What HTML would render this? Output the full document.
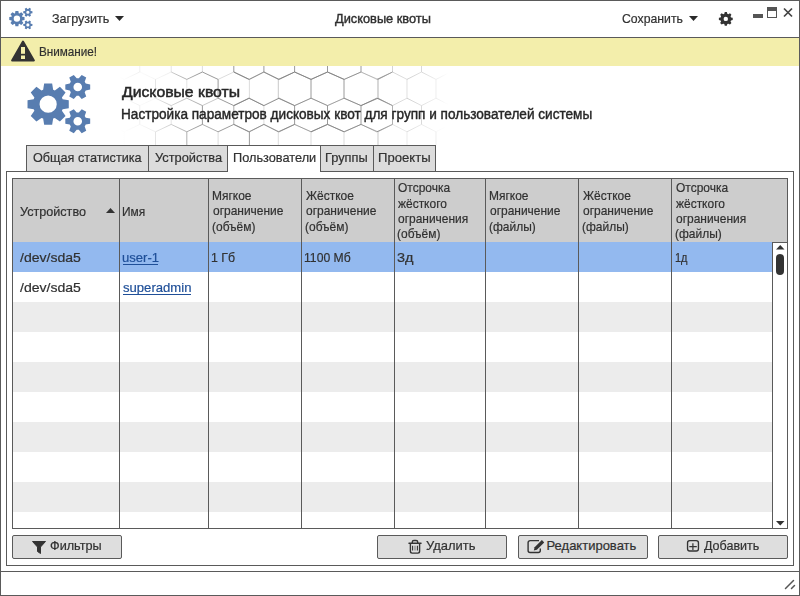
<!DOCTYPE html>
<html><head><meta charset="utf-8">
<style>
*{box-sizing:border-box;margin:0;padding:0}
html,body{width:800px;height:596px;overflow:hidden;background:#fff}
body{position:relative;font-family:"Liberation Sans",sans-serif;color:#333;font-size:13px}
.a{position:absolute}
.t{position:absolute;white-space:nowrap;line-height:1;transform-origin:0 0}
</style></head><body>
<div class="a" style="left:0;top:0;width:800px;height:596px;border:1px solid #5a5a5a"></div>
<svg class="a" style="left:0;top:0" width="40" height="37"><path fill="#587db0" fill-rule="evenodd" d="M18.75 13.25 L18.38 10.97 L15.42 10.97 L15.05 13.25 L14.42 13.51 L12.55 12.16 L10.46 14.25 L11.81 16.12 L11.55 16.75 L9.27 17.12 L9.27 20.08 L11.55 20.45 L11.81 21.08 L10.46 22.95 L12.55 25.04 L14.42 23.69 L15.05 23.95 L15.42 26.23 L18.38 26.23 L18.75 23.95 L19.38 23.69 L21.25 25.04 L23.34 22.95 L21.99 21.08 L22.25 20.45 L24.53 20.08 L24.53 17.12 L22.25 16.75 L21.99 16.12 L23.34 14.25 L21.25 12.16 L19.38 13.51ZM20.08 18.60A3.18 3.18 0 1 0 13.72 18.60A3.18 3.18 0 1 0 20.08 18.60ZM30.82 13.51 L32.45 13.22 L32.45 11.29 L30.82 11.00 L30.42 10.32 L30.98 8.75 L29.32 7.79 L28.24 9.06 L27.46 9.06 L26.39 7.79 L24.72 8.75 L25.28 10.32 L24.89 11.00 L23.25 11.29 L23.25 13.22 L24.89 13.51 L25.28 14.19 L24.72 15.76 L26.39 16.72 L27.46 15.45 L28.24 15.45 L29.32 16.72 L30.98 15.76 L30.42 14.19ZM29.44 12.25A1.59 1.59 0 1 0 26.26 12.25A1.59 1.59 0 1 0 29.44 12.25ZM30.82 26.17 L32.45 25.87 L32.45 23.95 L30.82 23.65 L30.42 22.97 L30.98 21.41 L29.32 20.44 L28.24 21.71 L27.46 21.71 L26.39 20.44 L24.72 21.41 L25.28 22.97 L24.89 23.65 L23.25 23.95 L23.25 25.87 L24.89 26.17 L25.28 26.85 L24.72 28.41 L26.39 29.37 L27.46 28.10 L28.24 28.10 L29.32 29.37 L30.98 28.41 L30.42 26.85ZM29.44 24.91A1.59 1.59 0 1 0 26.26 24.91A1.59 1.59 0 1 0 29.44 24.91Z"/></svg>
<div class="t" style="left:51.50px;top:12.00px;font-size:13px;-webkit-text-stroke:0.2px #2a2a2a;transform:scaleX(0.9661);">Загрузить</div>
<svg class="a" style="left:115px;top:16px" width="9" height="5"><path d="M0 0H9L4.5 5Z" fill="#2a2a2a"/></svg>
<div class="t" style="left:334.70px;top:11.70px;font-size:13px;-webkit-text-stroke:0.4px #2a2a2a;transform:scaleX(0.9845);">Дисковые квоты</div>
<div class="t" style="left:621.90px;top:12.00px;font-size:13px;-webkit-text-stroke:0.2px #2a2a2a;transform:scaleX(0.9430);">Сохранить</div>
<svg class="a" style="left:689px;top:16px" width="9" height="5"><path d="M0 0H9L4.5 5Z" fill="#2a2a2a"/></svg>
<svg class="a" style="left:700px;top:0" width="40" height="37"><path fill="#333" fill-rule="evenodd" d="M27.30 13.71 L26.85 11.98 L24.75 11.98 L24.30 13.71 L23.19 14.17 L21.65 13.26 L20.16 14.75 L21.07 16.29 L20.61 17.40 L18.88 17.85 L18.88 19.95 L20.61 20.40 L21.07 21.51 L20.16 23.05 L21.65 24.54 L23.19 23.63 L24.30 24.09 L24.75 25.82 L26.85 25.82 L27.30 24.09 L28.41 23.63 L29.95 24.54 L31.44 23.05 L30.53 21.51 L30.99 20.40 L32.72 19.95 L32.72 17.85 L30.99 17.40 L30.53 16.29 L31.44 14.75 L29.95 13.26 L28.41 14.17ZM28.00 18.90A2.20 2.20 0 1 0 23.60 18.90A2.20 2.20 0 1 0 28.00 18.90Z"/></svg>
<div class="a" style="left:753px;top:14px;width:10px;height:4px;background:#555"></div>
<div class="a" style="left:767px;top:7px;width:10px;height:11px;border:1px solid #555;border-top:4px solid #555"></div>
<svg class="a" style="left:783px;top:7px" width="10" height="11"><path d="M1 1.5L9 9.5M9 1.5L1 9.5" stroke="#444" stroke-width="1.7"/></svg>
<div class="a" style="left:0;top:37px;width:800px;height:1px;background:#5a5a5a"></div>
<div class="a" style="left:1px;top:38px;width:798px;height:28px;background:#f3eeab"></div>
<svg class="a" style="left:11px;top:40px" width="25" height="23" viewBox="0 0 25 23"><path d="M12 1.6 L22.9 20.4 H1.1 Z" fill="#333" stroke="#333" stroke-width="2" stroke-linejoin="round"/><rect x="10" y="7" width="4" height="6.8" fill="#f3eeab"/><rect x="10" y="15.5" width="4" height="3.5" fill="#f3eeab"/></svg>
<div class="t" style="left:38.60px;top:44.80px;font-size:13px;-webkit-text-stroke:0.2px #2a2a2a;transform:scaleX(0.9000);">Внимание!</div>
<svg class="a" style="left:0;top:66px" width="800" height="79"><defs><linearGradient id="hg" x1="0" x2="800" y1="0" y2="0" gradientUnits="userSpaceOnUse"><stop offset="0.15" stop-color="#fff" stop-opacity="0"/><stop offset="0.2" stop-color="#fff" stop-opacity="0.3"/><stop offset="0.25" stop-color="#fff" stop-opacity="1"/><stop offset="0.47" stop-color="#fff" stop-opacity="1"/><stop offset="0.52" stop-color="#fff" stop-opacity="0.45"/><stop offset="0.56" stop-color="#fff" stop-opacity="0"/></linearGradient><mask id="hm"><rect x="0" y="0" width="800" height="79" fill="url(#hg)"/></mask></defs><g mask="url(#hm)" fill="none" stroke="#808080" stroke-width="0.8"><path stroke-opacity="0.8" d="M93 13.4L93 32.2"/><path stroke-opacity="0.55" d="M93 13.4L108.6 6.0"/><path stroke-opacity="1" d="M93 32.2L108.6 39.6"/><path stroke-opacity="1" d="M93 65.8L93 84.6"/><path stroke-opacity="0.35" d="M93 65.8L108.6 58.4"/><path stroke-opacity="0.35" d="M93 84.6L108.6 92.0"/><path stroke-opacity="1" d="M108.6 -12.8L108.6 6.0"/><path stroke-opacity="0.35" d="M108.6 -12.8L124.2 -20.2"/><path stroke-opacity="0.8" d="M108.6 6.0L124.2 13.4"/><path stroke-opacity="1" d="M108.6 39.6L108.6 58.4"/><path stroke-opacity="0.35" d="M108.6 39.6L124.2 32.2"/><path stroke-opacity="1" d="M108.6 58.4L124.2 65.8"/><path stroke-opacity="0.55" d="M108.6 92.0L124.2 84.6"/><path stroke-opacity="0.35" d="M124.2 -20.2L139.8 -12.8"/><path stroke-opacity="0.35" d="M124.2 13.4L124.2 32.2"/><path stroke-opacity="1" d="M124.2 13.4L139.8 6.0"/><path stroke-opacity="1" d="M124.2 32.2L139.8 39.6"/><path stroke-opacity="0.35" d="M124.2 65.8L124.2 84.6"/><path stroke-opacity="0.55" d="M124.2 65.8L139.8 58.4"/><path stroke-opacity="0.35" d="M124.2 84.6L139.8 92.0"/><path stroke-opacity="1" d="M139.8 -12.8L139.8 6.0"/><path stroke-opacity="1" d="M139.8 -12.8L155.5 -20.2"/><path stroke-opacity="0.35" d="M139.8 6.0L155.5 13.4"/><path stroke-opacity="1" d="M139.8 39.6L139.8 58.4"/><path stroke-opacity="0.35" d="M139.8 39.6L155.5 32.2"/><path stroke-opacity="0.55" d="M139.8 58.4L155.5 65.8"/><path stroke-opacity="1" d="M139.8 92.0L155.5 84.6"/><path stroke-opacity="1" d="M155.5 -20.2L171.2 -12.8"/><path stroke-opacity="1" d="M155.5 13.4L155.5 32.2"/><path stroke-opacity="0.35" d="M155.5 13.4L171.2 6.0"/><path stroke-opacity="1" d="M155.5 32.2L171.2 39.6"/><path stroke-opacity="1" d="M155.5 65.8L155.5 84.6"/><path stroke-opacity="1" d="M155.5 65.8L171.2 58.4"/><path stroke-opacity="0.35" d="M155.5 84.6L171.2 92.0"/><path stroke-opacity="0.55" d="M171.2 -12.8L171.2 6.0"/><path stroke-opacity="0.35" d="M171.2 -12.8L186.8 -20.2"/><path stroke-opacity="1" d="M171.2 6.0L186.8 13.4"/><path stroke-opacity="0.55" d="M171.2 39.6L171.2 58.4"/><path stroke-opacity="0.8" d="M171.2 39.6L186.8 32.2"/><path stroke-opacity="1" d="M171.2 58.4L186.8 65.8"/><path stroke-opacity="0.55" d="M171.2 92.0L186.8 84.6"/><path stroke-opacity="1" d="M186.8 -20.2L202.4 -12.8"/><path stroke-opacity="0.35" d="M186.8 13.4L186.8 32.2"/><path stroke-opacity="1" d="M186.8 13.4L202.4 6.0"/><path stroke-opacity="0.8" d="M186.8 32.2L202.4 39.6"/><path stroke-opacity="1" d="M186.8 65.8L186.8 84.6"/><path stroke-opacity="1" d="M186.8 65.8L202.4 58.4"/><path stroke-opacity="0.55" d="M186.8 84.6L202.4 92.0"/><path stroke-opacity="0.35" d="M202.4 -12.8L202.4 6.0"/><path stroke-opacity="1" d="M202.4 -12.8L218.1 -20.2"/><path stroke-opacity="1" d="M202.4 6.0L218.1 13.4"/><path stroke-opacity="1" d="M202.4 39.6L202.4 58.4"/><path stroke-opacity="0.55" d="M202.4 39.6L218.1 32.2"/><path stroke-opacity="0.8" d="M202.4 58.4L218.1 65.8"/><path stroke-opacity="0.35" d="M202.4 92.0L218.1 84.6"/><path stroke-opacity="1" d="M218.1 -20.2L233.8 -12.8"/><path stroke-opacity="1" d="M218.1 13.4L218.1 32.2"/><path stroke-opacity="0.35" d="M218.1 13.4L233.8 6.0"/><path stroke-opacity="1" d="M218.1 32.2L233.8 39.6"/><path stroke-opacity="0.35" d="M218.1 65.8L218.1 84.6"/><path stroke-opacity="1" d="M218.1 65.8L233.8 58.4"/><path stroke-opacity="0.55" d="M218.1 84.6L233.8 92.0"/><path stroke-opacity="1" d="M233.8 -12.8L233.8 6.0"/><path stroke-opacity="1" d="M233.8 -12.8L248.8 -20.2"/><path stroke-opacity="1" d="M233.8 6.0L248.8 13.4"/><path stroke-opacity="1" d="M233.8 6.0L249.4 13.4"/><path stroke-opacity="0.8" d="M233.8 39.6L233.8 58.4"/><path stroke-opacity="1" d="M233.8 39.6L248.8 32.2"/><path stroke-opacity="1" d="M233.8 39.6L249.4 32.2"/><path stroke-opacity="1" d="M233.8 58.4L248.8 65.8"/><path stroke-opacity="0.8" d="M233.8 58.4L249.4 65.8"/><path stroke-opacity="0.8" d="M233.8 92.0L249.4 84.6"/><path stroke-opacity="0.55" d="M248.8 -20.2L263.9 -12.8"/><path stroke-opacity="0.55" d="M248.8 13.4L263.9 6.0"/><path stroke-opacity="1" d="M248.8 32.2L263.9 39.6"/><path stroke-opacity="0.55" d="M248.8 65.8L263.9 58.4"/><path stroke-opacity="0.35" d="M249.4 13.4L249.4 32.2"/><path stroke-opacity="1" d="M249.4 13.4L263.9 6.0"/><path stroke-opacity="0.8" d="M249.4 32.2L263.9 39.6"/><path stroke-opacity="1" d="M249.4 65.8L249.4 84.6"/><path stroke-opacity="1" d="M249.4 65.8L263.9 58.4"/><path stroke-opacity="0.8" d="M249.4 84.6L263.9 92.0"/><path stroke-opacity="1" d="M263.9 -12.8L263.9 6.0"/><path stroke-opacity="1" d="M263.9 -12.8L279.2 -20.2"/><path stroke-opacity="0.8" d="M263.9 6.0L278.3 13.4"/><path stroke-opacity="1" d="M263.9 6.0L279.2 13.4"/><path stroke-opacity="0.35" d="M263.9 39.6L263.9 58.4"/><path stroke-opacity="0.35" d="M263.9 39.6L278.3 32.2"/><path stroke-opacity="1" d="M263.9 39.6L279.2 32.2"/><path stroke-opacity="1" d="M263.9 58.4L278.3 65.8"/><path stroke-opacity="0.55" d="M263.9 58.4L279.2 65.8"/><path stroke-opacity="0.8" d="M263.9 92.0L278.3 84.6"/><path stroke-opacity="0.55" d="M278.3 13.4L278.3 32.2"/><path stroke-opacity="1" d="M278.3 13.4L294.6 6.0"/><path stroke-opacity="1" d="M278.3 32.2L294.6 39.6"/><path stroke-opacity="0.35" d="M278.3 65.8L278.3 84.6"/><path stroke-opacity="1" d="M278.3 65.8L294.6 58.4"/><path stroke-opacity="0.35" d="M278.3 84.6L294.6 92.0"/><path stroke-opacity="1" d="M279.2 -20.2L294.6 -12.8"/><path stroke-opacity="1" d="M279.2 13.4L294.6 6.0"/><path stroke-opacity="0.8" d="M279.2 32.2L294.6 39.6"/><path stroke-opacity="0.8" d="M279.2 65.8L294.6 58.4"/><path stroke-opacity="1" d="M294.6 -12.8L294.6 6.0"/><path stroke-opacity="0.8" d="M294.6 -12.8L311.1 -20.2"/><path stroke-opacity="1" d="M294.6 6.0L311 13.4"/><path stroke-opacity="1" d="M294.6 6.0L311.1 13.4"/><path stroke-opacity="1" d="M294.6 39.6L294.6 58.4"/><path stroke-opacity="1" d="M294.6 39.6L311 32.2"/><path stroke-opacity="0.35" d="M294.6 39.6L311.1 32.2"/><path stroke-opacity="0.35" d="M294.6 58.4L311 65.8"/><path stroke-opacity="0.8" d="M294.6 58.4L311.1 65.8"/><path stroke-opacity="1" d="M294.6 92.0L311 84.6"/><path stroke-opacity="1" d="M311 13.4L311 32.2"/><path stroke-opacity="1" d="M311 13.4L327.5 6.0"/><path stroke-opacity="0.35" d="M311 32.2L327.5 39.6"/><path stroke-opacity="0.35" d="M311 65.8L311 84.6"/><path stroke-opacity="1" d="M311 65.8L327.5 58.4"/><path stroke-opacity="1" d="M311 84.6L327.5 92.0"/><path stroke-opacity="0.8" d="M311.1 -20.2L327.5 -12.8"/><path stroke-opacity="1" d="M311.1 13.4L327.5 6.0"/><path stroke-opacity="1" d="M311.1 32.2L327.5 39.6"/><path stroke-opacity="1" d="M311.1 65.8L327.5 58.4"/><path stroke-opacity="1" d="M327.5 -12.8L327.5 6.0"/><path stroke-opacity="0.8" d="M327.5 -12.8L344.2 -20.2"/><path stroke-opacity="1" d="M327.5 6.0L344 13.4"/><path stroke-opacity="1" d="M327.5 6.0L344.2 13.4"/><path stroke-opacity="1" d="M327.5 39.6L327.5 58.4"/><path stroke-opacity="0.8" d="M327.5 39.6L344 32.2"/><path stroke-opacity="0.35" d="M327.5 39.6L344.2 32.2"/><path stroke-opacity="1" d="M327.5 58.4L344 65.8"/><path stroke-opacity="0.8" d="M327.5 58.4L344.2 65.8"/><path stroke-opacity="0.55" d="M327.5 92.0L344 84.6"/><path stroke-opacity="1" d="M344 13.4L344 32.2"/><path stroke-opacity="0.35" d="M344 13.4L361.0 6.0"/><path stroke-opacity="1" d="M344 32.2L361.0 39.6"/><path stroke-opacity="0.35" d="M344 65.8L344 84.6"/><path stroke-opacity="0.55" d="M344 65.8L361.0 58.4"/><path stroke-opacity="0.8" d="M344 84.6L361.0 92.0"/><path stroke-opacity="0.55" d="M344.2 -20.2L361.0 -12.8"/><path stroke-opacity="1" d="M344.2 13.4L361.0 6.0"/><path stroke-opacity="0.55" d="M344.2 32.2L361.0 39.6"/><path stroke-opacity="1" d="M344.2 65.8L361.0 58.4"/><path stroke-opacity="1" d="M361.0 -12.8L361.0 6.0"/><path stroke-opacity="1" d="M361.0 -12.8L376.8 -20.2"/><path stroke-opacity="0.35" d="M361.0 6.0L376.8 13.4"/><path stroke-opacity="0.55" d="M361.0 6.0L378 13.4"/><path stroke-opacity="1" d="M361.0 39.6L361.0 58.4"/><path stroke-opacity="1" d="M361.0 39.6L376.8 32.2"/><path stroke-opacity="1" d="M361.0 39.6L378 32.2"/><path stroke-opacity="0.8" d="M361.0 58.4L376.8 65.8"/><path stroke-opacity="0.55" d="M361.0 58.4L378 65.8"/><path stroke-opacity="1" d="M361.0 92.0L378 84.6"/><path stroke-opacity="1" d="M376.8 -20.2L392.5 -12.8"/><path stroke-opacity="0.8" d="M376.8 13.4L392.5 6.0"/><path stroke-opacity="1" d="M376.8 32.2L392.5 39.6"/><path stroke-opacity="1" d="M376.8 65.8L392.5 58.4"/><path stroke-opacity="0.8" d="M378 13.4L378 32.2"/><path stroke-opacity="1" d="M378 13.4L392.5 6.0"/><path stroke-opacity="1" d="M378 32.2L392.5 39.6"/><path stroke-opacity="0.55" d="M378 65.8L378 84.6"/><path stroke-opacity="0.55" d="M378 65.8L392.5 58.4"/><path stroke-opacity="0.35" d="M378 84.6L392.5 92.0"/><path stroke-opacity="0.55" d="M392.5 -12.8L392.5 6.0"/><path stroke-opacity="0.55" d="M392.5 -12.8L407.0 -20.2"/><path stroke-opacity="0.55" d="M392.5 6.0L407.0 13.4"/><path stroke-opacity="1" d="M392.5 39.6L392.5 58.4"/><path stroke-opacity="0.55" d="M392.5 39.6L407 32.2"/><path stroke-opacity="0.35" d="M392.5 58.4L407.0 65.8"/><path stroke-opacity="1" d="M392.5 92.0L407 84.6"/><path stroke-opacity="1" d="M407.0 -20.2L421.5 -12.8"/><path stroke-opacity="0.55" d="M407 13.4L407 32.2"/><path stroke-opacity="0.8" d="M407.0 13.4L421.5 6.0"/><path stroke-opacity="0.8" d="M407 32.2L421.5 39.6"/><path stroke-opacity="0.35" d="M407 65.8L407 84.6"/><path stroke-opacity="0.55" d="M407.0 65.8L421.5 58.4"/><path stroke-opacity="1" d="M407 84.6L421.5 92.0"/><path stroke-opacity="1" d="M421.5 -12.8L421.5 6.0"/><path stroke-opacity="0.8" d="M421.5 -12.8L436.0 -20.2"/><path stroke-opacity="1" d="M421.5 6.0L436.0 13.4"/><path stroke-opacity="1" d="M421.5 39.6L421.5 58.4"/><path stroke-opacity="0.8" d="M421.5 39.6L436 32.2"/><path stroke-opacity="0.55" d="M421.5 58.4L436.0 65.8"/><path stroke-opacity="1" d="M421.5 92.0L436 84.6"/><path stroke-opacity="1" d="M436.0 -20.2L450.5 -12.8"/><path stroke-opacity="1" d="M436 13.4L436 32.2"/><path stroke-opacity="1" d="M436.0 13.4L450.5 6.0"/><path stroke-opacity="1" d="M436 32.2L450.5 39.6"/><path stroke-opacity="1" d="M436 65.8L436 84.6"/><path stroke-opacity="0.35" d="M436.0 65.8L450.5 58.4"/><path stroke-opacity="1" d="M436 84.6L450.5 92.0"/><path stroke-opacity="1" d="M450.5 -12.8L450.5 6.0"/><path stroke-opacity="1" d="M450.5 -12.8L465.0 -20.2"/><path stroke-opacity="1" d="M450.5 6.0L465.0 13.4"/><path stroke-opacity="1" d="M450.5 39.6L450.5 58.4"/><path stroke-opacity="1" d="M450.5 39.6L465 32.2"/><path stroke-opacity="1" d="M450.5 58.4L465.0 65.8"/><path stroke-opacity="0.35" d="M450.5 92.0L465 84.6"/><path stroke-opacity="1" d="M465.0 -20.2L479.5 -12.8"/><path stroke-opacity="1" d="M465 13.4L465 32.2"/><path stroke-opacity="1" d="M465.0 13.4L479.5 6.0"/><path stroke-opacity="0.35" d="M465 32.2L479.5 39.6"/><path stroke-opacity="0.55" d="M465 65.8L465 84.6"/><path stroke-opacity="0.35" d="M465.0 65.8L479.5 58.4"/><path stroke-opacity="0.55" d="M465 84.6L479.5 92.0"/><path stroke-opacity="1" d="M479.5 -12.8L479.5 6.0"/><path stroke-opacity="0.55" d="M479.5 6.0L494 13.4"/><path stroke-opacity="0.35" d="M479.5 39.6L479.5 58.4"/><path stroke-opacity="0.8" d="M479.5 39.6L494 32.2"/><path stroke-opacity="1" d="M479.5 58.4L494 65.8"/><path stroke-opacity="0.35" d="M479.5 92.0L494 84.6"/><path stroke-opacity="0.35" d="M494 13.4L494 32.2"/><path stroke-opacity="0.35" d="M494 65.8L494 84.6"/></g></svg>
<svg class="a" style="left:0;top:66px" width="800" height="79"><path fill="#587db0" fill-rule="evenodd" d="M53.15 23.69 L52.15 17.53 L44.15 17.53 L43.15 23.69 L41.46 24.39 L36.40 20.74 L30.74 26.40 L34.39 31.46 L33.69 33.15 L27.53 34.15 L27.53 42.15 L33.69 43.15 L34.39 44.84 L30.74 49.90 L36.40 55.56 L41.46 51.91 L43.15 52.61 L44.15 58.77 L52.15 58.77 L53.15 52.61 L54.84 51.91 L59.90 55.56 L65.56 49.90 L61.91 44.84 L62.61 43.15 L68.77 42.15 L68.77 34.15 L62.61 33.15 L61.91 31.46 L65.56 26.40 L59.90 20.74 L54.84 24.39ZM56.75 38.15A8.60 8.60 0 1 0 39.55 38.15A8.60 8.60 0 1 0 56.75 38.15ZM85.76 24.40 L90.18 23.60 L90.18 18.40 L85.76 17.60 L84.70 15.76 L86.22 11.53 L81.71 8.93 L78.81 12.36 L76.69 12.36 L73.79 8.93 L69.28 11.53 L70.80 15.76 L69.74 17.60 L65.32 18.40 L65.32 23.60 L69.74 24.40 L70.80 26.24 L69.28 30.47 L73.79 33.07 L76.69 29.64 L78.81 29.64 L81.71 33.07 L86.22 30.47 L84.70 26.24ZM82.05 21.00A4.30 4.30 0 1 0 73.45 21.00A4.30 4.30 0 1 0 82.05 21.00ZM85.76 58.60 L90.18 57.80 L90.18 52.60 L85.76 51.80 L84.70 49.96 L86.22 45.73 L81.71 43.13 L78.81 46.56 L76.69 46.56 L73.79 43.13 L69.28 45.73 L70.80 49.96 L69.74 51.80 L65.32 52.60 L65.32 57.80 L69.74 58.60 L70.80 60.44 L69.28 64.67 L73.79 67.27 L76.69 63.84 L78.81 63.84 L81.71 67.27 L86.22 64.67 L84.70 60.44ZM82.05 55.20A4.30 4.30 0 1 0 73.45 55.20A4.30 4.30 0 1 0 82.05 55.20Z"/></svg>
<div class="t" style="left:121.80px;top:84.30px;font-size:15px;-webkit-text-stroke:0.5px #262626;color:#262626;transform:scaleX(1.0500);">Дисковые квоты</div>
<div class="t" style="left:120.83px;top:107.35px;font-size:14px;-webkit-text-stroke:0.4px #262626;color:#262626;transform:scaleX(0.9715);">Настройка параметров дисковых квот для групп и пользователей системы</div>
<div class="a" style="left:26px;top:145px;width:123px;height:27px;background:#dcdcdc;border:1px solid #5a5a5a"></div>
<div class="a" style="left:148px;top:145px;width:80px;height:27px;background:#dcdcdc;border:1px solid #5a5a5a"></div>
<div class="a" style="left:320px;top:145px;width:54px;height:27px;background:#dcdcdc;border:1px solid #5a5a5a"></div>
<div class="a" style="left:373px;top:145px;width:63px;height:27px;background:#dcdcdc;border:1px solid #5a5a5a"></div>
<div class="a" style="left:6px;top:171px;width:788px;height:395px;border:1px solid #5a5a5a"></div>
<div class="a" style="left:227px;top:145px;width:94px;height:27px;background:#fff;border:1px solid #5a5a5a;border-bottom:none"></div>
<div class="t" style="left:32.50px;top:151.00px;font-size:13px;-webkit-text-stroke:0.2px #2a2a2a;transform:scaleX(0.9741);">Общая статистика</div>
<div class="t" style="left:154.75px;top:151.00px;font-size:13px;-webkit-text-stroke:0.2px #2a2a2a;transform:scaleX(0.9875);">Устройства</div>
<div class="t" style="left:232.52px;top:151.00px;font-size:13px;-webkit-text-stroke:0.2px #2a2a2a;transform:scaleX(0.9807);">Пользователи</div>
<div class="t" style="left:325.01px;top:151.00px;font-size:13px;-webkit-text-stroke:0.2px #2a2a2a;transform:scaleX(0.9857);">Группы</div>
<div class="t" style="left:377.99px;top:151.00px;font-size:13px;-webkit-text-stroke:0.2px #2a2a2a;transform:scaleX(1.0078);">Проекты</div>
<div class="a" style="left:12px;top:178px;width:776px;height:351px;border:1px solid #5a5a5a"></div>
<div class="a" style="left:13px;top:179px;width:774px;height:63px;background:#cdcdcd"></div>
<div class="a" style="left:13px;top:242px;width:759px;height:30px;background:#93b9ef"></div>
<div class="a" style="left:13px;top:302px;width:759px;height:30px;background:#ececec"></div>
<div class="a" style="left:13px;top:362px;width:759px;height:30px;background:#ececec"></div>
<div class="a" style="left:13px;top:422px;width:759px;height:30px;background:#ececec"></div>
<div class="a" style="left:13px;top:482px;width:759px;height:30px;background:#ececec"></div>
<div class="a" style="left:119px;top:179px;width:1px;height:349px;background:#5a5a5a"></div>
<div class="a" style="left:208px;top:179px;width:1px;height:349px;background:#5a5a5a"></div>
<div class="a" style="left:301px;top:179px;width:1px;height:349px;background:#5a5a5a"></div>
<div class="a" style="left:394px;top:179px;width:1px;height:349px;background:#5a5a5a"></div>
<div class="a" style="left:485px;top:179px;width:1px;height:349px;background:#5a5a5a"></div>
<div class="a" style="left:578px;top:179px;width:1px;height:349px;background:#5a5a5a"></div>
<div class="a" style="left:671px;top:179px;width:1px;height:349px;background:#5a5a5a"></div>
<div class="a" style="left:772px;top:242px;width:15px;height:286px;background:#fff;border-left:1px solid #5a5a5a;border-top:1px solid #5a5a5a"></div>
<svg class="a" style="left:776px;top:245px" width="9" height="5"><path d="M0 4.5H8.5L4.25 0Z" fill="#333"/></svg>
<div class="a" style="left:776px;top:254px;width:8px;height:21px;background:#333;border-radius:4px"></div>
<svg class="a" style="left:776px;top:521px" width="9" height="5"><path d="M0 0H8.5L4.25 4.5Z" fill="#333"/></svg>
<div class="t" style="left:19.75px;top:204.80px;font-size:13px;-webkit-text-stroke:0.2px #2a2a2a;transform:scaleX(0.9699);">Устройство</div>
<svg class="a" style="left:106px;top:208px" width="9" height="5"><path d="M0 5H9L4.5 0Z" fill="#333"/></svg>
<div class="t" style="left:122.33px;top:204.80px;font-size:13px;-webkit-text-stroke:0.2px #2a2a2a;transform:scaleX(0.9167);">Имя</div>
<div class="t" style="left:211.83px;top:188.90px;font-size:13px;-webkit-text-stroke:0.2px #2a2a2a;transform:scaleX(0.9200);">Мягкое</div>
<div class="t" style="left:212.75px;top:204.30px;font-size:13px;-webkit-text-stroke:0.2px #2a2a2a;transform:scaleX(0.9200);">ограничение</div>
<div class="t" style="left:211.83px;top:219.70px;font-size:13px;-webkit-text-stroke:0.2px #2a2a2a;transform:scaleX(0.9200);">(объём)</div>
<div class="t" style="left:305.50px;top:188.90px;font-size:13px;-webkit-text-stroke:0.2px #2a2a2a;transform:scaleX(0.9200);">Жёсткое</div>
<div class="t" style="left:305.50px;top:204.30px;font-size:13px;-webkit-text-stroke:0.2px #2a2a2a;transform:scaleX(0.9200);">ограничение</div>
<div class="t" style="left:304.58px;top:219.70px;font-size:13px;-webkit-text-stroke:0.2px #2a2a2a;transform:scaleX(0.9200);">(объём)</div>
<div class="t" style="left:398.25px;top:181.10px;font-size:13px;-webkit-text-stroke:0.2px #2a2a2a;transform:scaleX(0.9200);">Отсрочка</div>
<div class="t" style="left:398.25px;top:196.50px;font-size:13px;-webkit-text-stroke:0.2px #2a2a2a;transform:scaleX(0.9200);">жёсткого</div>
<div class="t" style="left:398.25px;top:211.90px;font-size:13px;-webkit-text-stroke:0.2px #2a2a2a;transform:scaleX(0.9200);">ограничения</div>
<div class="t" style="left:397.33px;top:227.30px;font-size:13px;-webkit-text-stroke:0.2px #2a2a2a;transform:scaleX(0.9200);">(объём)</div>
<div class="t" style="left:488.58px;top:188.90px;font-size:13px;-webkit-text-stroke:0.2px #2a2a2a;transform:scaleX(0.9200);">Мягкое</div>
<div class="t" style="left:489.50px;top:204.30px;font-size:13px;-webkit-text-stroke:0.2px #2a2a2a;transform:scaleX(0.9200);">ограничение</div>
<div class="t" style="left:488.58px;top:219.70px;font-size:13px;-webkit-text-stroke:0.2px #2a2a2a;transform:scaleX(0.9200);">(файлы)</div>
<div class="t" style="left:582.50px;top:188.90px;font-size:13px;-webkit-text-stroke:0.2px #2a2a2a;transform:scaleX(0.9200);">Жёсткое</div>
<div class="t" style="left:582.50px;top:204.30px;font-size:13px;-webkit-text-stroke:0.2px #2a2a2a;transform:scaleX(0.9200);">ограничение</div>
<div class="t" style="left:581.58px;top:219.70px;font-size:13px;-webkit-text-stroke:0.2px #2a2a2a;transform:scaleX(0.9200);">(файлы)</div>
<div class="t" style="left:675.50px;top:181.10px;font-size:13px;-webkit-text-stroke:0.2px #2a2a2a;transform:scaleX(0.9200);">Отсрочка</div>
<div class="t" style="left:675.50px;top:196.50px;font-size:13px;-webkit-text-stroke:0.2px #2a2a2a;transform:scaleX(0.9200);">жёсткого</div>
<div class="t" style="left:675.50px;top:211.90px;font-size:13px;-webkit-text-stroke:0.2px #2a2a2a;transform:scaleX(0.9200);">ограничения</div>
<div class="t" style="left:674.58px;top:227.30px;font-size:13px;-webkit-text-stroke:0.2px #2a2a2a;transform:scaleX(0.9200);">(файлы)</div>
<div class="t" style="left:19.50px;top:251.00px;font-size:13px;-webkit-text-stroke:0.2px #2a2a2a;transform:scaleX(1.0804);">/dev/sda5</div>
<div class="t" style="left:122.24px;top:251.00px;font-size:13px;-webkit-text-stroke:0.2px #1f4f98;color:#1f4f98;transform:scaleX(1.0071);">user-1</div>
<div class="a" style="left:123px;top:264px;width:35px;height:1px;background:#1f4f98"></div>
<div class="t" style="left:210.95px;top:251.00px;font-size:13px;-webkit-text-stroke:0.2px #2a2a2a;transform:scaleX(0.9500);">1 Гб</div>
<div class="t" style="left:304.46px;top:251.00px;font-size:13px;-webkit-text-stroke:0.2px #2a2a2a;transform:scaleX(0.9367);">1100 Мб</div>
<div class="t" style="left:397.29px;top:251.00px;font-size:13px;-webkit-text-stroke:0.2px #2a2a2a;transform:scaleX(1.1143);">3д</div>
<div class="t" style="left:675.16px;top:251.00px;font-size:13px;-webkit-text-stroke:0.2px #2a2a2a;transform:scaleX(0.8429);">1д</div>
<div class="t" style="left:19.50px;top:281.00px;font-size:13px;-webkit-text-stroke:0.2px #2a2a2a;transform:scaleX(1.0804);">/dev/sda5</div>
<div class="t" style="left:123.25px;top:281.00px;font-size:13px;-webkit-text-stroke:0.2px #1f4f98;color:#1f4f98;transform:scaleX(1.0075);">superadmin</div>
<div class="a" style="left:123px;top:294px;width:68px;height:1px;background:#1f4f98"></div>
<div class="a" style="left:12px;top:535px;width:110px;height:24px;background:#dedede;border:1px solid #5a5a5a;border-radius:2px"></div>
<div class="a" style="left:377px;top:535px;width:130px;height:24px;background:#dedede;border:1px solid #5a5a5a;border-radius:2px"></div>
<div class="a" style="left:518px;top:535px;width:130px;height:24px;background:#dedede;border:1px solid #5a5a5a;border-radius:2px"></div>
<div class="a" style="left:658px;top:535px;width:130px;height:24px;background:#dedede;border:1px solid #5a5a5a;border-radius:2px"></div>
<svg class="a" style="left:32px;top:541px" width="14" height="13" viewBox="0 0 14 13"><path d="M0.5 0.5H13.5L8.5 6V12.5L5.5 10.5V6Z" fill="#333" stroke="#333" stroke-linejoin="round"/></svg>
<div class="t" style="left:49.52px;top:539.30px;font-size:13px;-webkit-text-stroke:0.2px #2a2a2a;transform:scaleX(0.9750);">Фильтры</div>
<svg class="a" style="left:404px;top:536px" width="20" height="20" viewBox="0 0 20 20"><path d="M5 7.2H17" stroke="#333" stroke-width="1.5" stroke-linecap="round"/><path d="M8.3 7.2V6.1A1.6 1.6 0 0 1 9.9 4.5H12.1A1.6 1.6 0 0 1 13.7 6.1V7.2M6.4 7.2V15.3A1.8 1.8 0 0 0 8.2 17.1H13.8A1.8 1.8 0 0 0 15.6 15.3V7.2" fill="none" stroke="#333" stroke-width="1.4"/><path d="M8.6 9.7V14.5M13.4 9.7V14.5" stroke="#333" stroke-width="1.1"/><path d="M11 9.7V14.5" stroke="#777" stroke-width="1"/></svg>
<div class="t" style="left:426.25px;top:539.30px;font-size:13px;-webkit-text-stroke:0.2px #2a2a2a;transform:scaleX(0.9949);">Удалить</div>
<svg class="a" style="left:524px;top:536px" width="24" height="20" viewBox="0 0 24 20"><path d="M15 4.6H6.1A2 2 0 0 0 4.1 6.6V14.5A2 2 0 0 0 6.1 16.5H14.3A2 2 0 0 0 16.3 14.5V12.6" fill="none" stroke="#333" stroke-width="1.4"/><path d="M9.8 14.6L10.6 11.3L17.9 4.1L20.2 6.4L12.9 13.7Z" fill="#333"/></svg>
<div class="t" style="left:546.50px;top:539.30px;font-size:13px;-webkit-text-stroke:0.2px #2a2a2a;">Редактировать</div>
<svg class="a" style="left:686px;top:539px" width="14" height="15" viewBox="0 0 14 15"><rect x="1.55" y="1.65" width="10.9" height="10.3" rx="2.2" fill="none" stroke="#333" stroke-width="1.35"/><path d="M6.9 4.2V11.1M3.3 7.6H10.8" stroke="#333" stroke-width="1.2"/></svg>
<div class="t" style="left:704.40px;top:539.30px;font-size:13px;-webkit-text-stroke:0.2px #2a2a2a;transform:scaleX(0.9632);">Добавить</div>
<div class="a" style="left:0;top:571px;width:800px;height:1px;background:#5a5a5a"></div>
<svg class="a" style="left:780px;top:576px" width="18" height="16"><path d="M5.5 12.5L13.5 4.5M11.5 12.5L14.5 9.5" stroke="#555" stroke-width="1.5" stroke-linecap="round"/></svg>
</body></html>
